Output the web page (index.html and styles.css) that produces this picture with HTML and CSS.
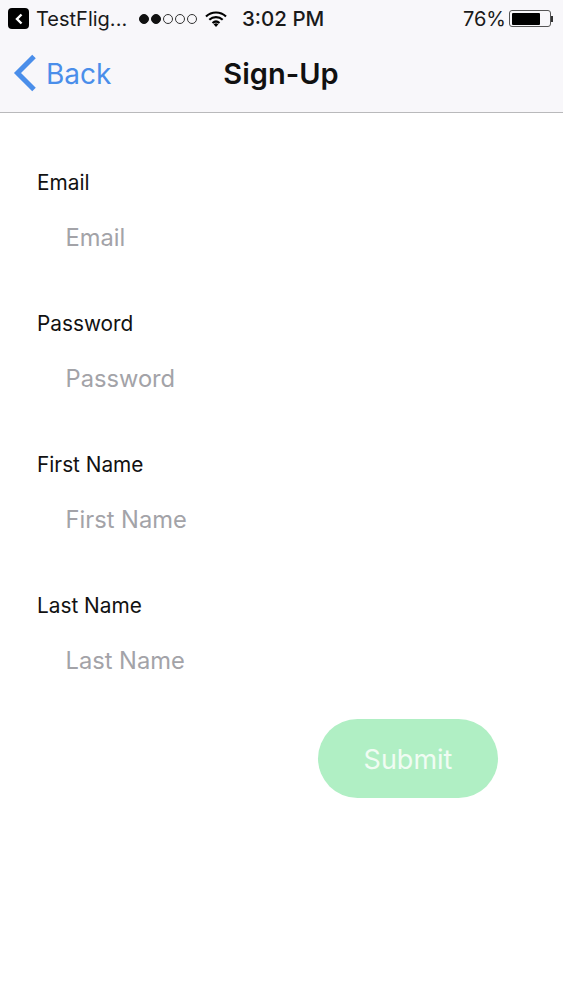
FILE: index.html
```html
<!DOCTYPE html>
<html>
<head>
<meta charset="utf-8">
<title>Sign-Up</title>
<link rel="stylesheet" href="styles.css">
</head>
<body>
<header class="top">
  <div class="status">
    <div class="status-left">
      <span class="app-back"><svg width="12" height="14" viewBox="0 0 12 14"><path d="M8.500 2.500 4 7l4.500 4.500" fill="none" stroke="#fff" stroke-width="2.400"/></svg></span>
      <span>TestFlig...</span>
      <span class="dots"><i class="dot on"></i><i class="dot on"></i><i class="dot"></i><i class="dot"></i><i class="dot"></i></span>
      <svg class="wifi" width="22" height="16" viewBox="0 0 22 16"><path d="M1 5.500a14.500 14.500 0 0 1 20 0M4.300 8.800a10 10 0 0 1 13.400 0M7.500 12a5.400 5.400 0 0 1 7 0" fill="none" stroke="#000" stroke-width="2.200"/><path d="M11 16l-2.400-2.800a3.600 3.600 0 0 1 4.800 0z"/></svg>
    </div>
    <div class="status-time">3:02 PM</div>
    <div class="status-right">
      <span>76%</span>
      <span class="battery"><span class="battery-fill"></span></span><span class="battery-tip"></span>
    </div>
  </div>
  <nav class="nav">
    <a class="back"><svg width="24" height="38" viewBox="0 0 24 38"><path d="M21 2.500 4.500 19 21 35.500" fill="none" stroke="#4a8eea" stroke-width="5"/></svg><span class="back-text">Back</span></a>
    <h1 class="title">Sign-Up</h1>
  </nav>
</header>
<main class="form">
  <div class="field"><label class="label">Email</label><div class="placeholder">Email</div></div>
  <div class="field"><label class="label">Password</label><div class="placeholder">Password</div></div>
  <div class="field"><label class="label">First Name</label><div class="placeholder">First Name</div></div>
  <div class="field"><label class="label">Last Name</label><div class="placeholder">Last Name</div></div>
  <div class="actions"><button class="submit">Submit</button></div>
</main>
</body>
</html>
```
FILE: styles.css
```css
* { box-sizing: border-box; }
html, body { margin: 0; padding: 0; background: #fff; }
body { width: 563px; height: 1000px; overflow: hidden; font-family: "Liberation Sans", Arial, sans-serif; color: #000; }
.top { height: 113px; background: #f8f7fa; border-bottom: 1px solid #b9b9bb; }
.status { height: 37px; padding: 0 10px 0 8px; display: flex; align-items: center; justify-content: space-between; position: relative; font-family: Inter, sans-serif; font-size: 20px; color: #1a1a1a; }
.status-left { display: flex; align-items: center; gap: 7px; }
.app-back { width: 21px; height: 21px; border-radius: 4px; background: #000; display: flex; align-items: center; justify-content: center; }
.dots { display: flex; gap: 2px; margin-left: 5px; }
.dot { width: 10px; height: 10px; border-radius: 50%; border: 1px solid #333; }
.dot.on { background: #111; border-color: #111; }
.wifi { margin-left: 1px; }
.status-time { position: absolute; left: 242px; font-size: 20.500px; font-weight: 500; }
.status-right { display: flex; align-items: center; }
.battery { width: 42px; height: 17px; margin-left: 3px; border: 1px solid #555; border-radius: 3px; padding: 1.500px; display: block; }
.battery-fill { display: block; height: 100%; width: 78%; background: #000; border-radius: 1px; }
.battery-tip { width: 2px; height: 6px; background: #333; }
.nav { height: 75px; position: relative; display: flex; align-items: center; justify-content: center; padding-bottom: 2px; padding-right: 1px; }
.back { position: absolute; left: 13px; top: 17px; display: flex; align-items: center; gap: 9px; color: #4a8eea; font-family: Inter, sans-serif; font-size: 28px; }
.back-text { padding-top: 2px; }
.title { margin: 0; font-family: Inter, sans-serif; font-size: 29px; font-weight: 600; color: #111; }
.form { padding-top: 58px; }
.field { height: 141px; padding-left: 37px; }
.label { display: block; height: 24px; font-family: Inter, sans-serif; font-size: 20.800px; line-height: 24px; color: #111; }
.placeholder { margin: 28px 0 0 28.500px; font-family: Inter, sans-serif; font-size: 23.700px; line-height: 30px; color: #a3a3a8; }
.actions { display: flex; justify-content: flex-end; padding: 0 65px 0 0; margin-top: -16px; }
.submit { width: 180px; height: 79px; border: 0; padding: 2px 0 0; border-radius: 40px; background: #b0efc4; color: #f0fcf3; font-family: Inter, sans-serif; font-size: 27px; }
```
